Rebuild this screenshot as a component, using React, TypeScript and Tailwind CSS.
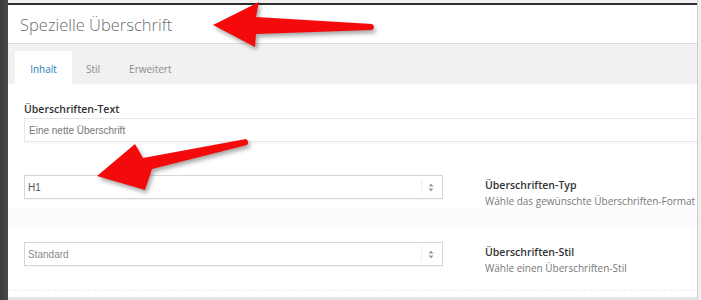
import React from 'react';

const sans = "font-['Open_Sans','Liberation_Sans',sans-serif]";

function UpDown() {
  return (
    <svg width="6" height="9" viewBox="0 0 6 9" className="text-[#999]">
      <path d="M3 0.5 L5.5 3.5 H0.5 Z" fill="currentColor" />
      <path d="M3 8.5 L5.5 5.5 H0.5 Z" fill="currentColor" />
    </svg>
  );
}

function SelectBox({ value, muted }: { value: string; muted?: boolean }) {
  return (
    <div className="flex h-[24px] w-[419px] items-center justify-between border border-[#d6d6d6] bg-white pl-[3px] pr-[8px] shadow-[0_1px_1px_rgba(0,0,0,0.04)]">
      <span className={`font-['Liberation_Sans',sans-serif] text-[10px] ${muted ? 'text-[#8a8a8a]' : 'text-[#555]'}`}>{value}</span>
      <div className="flex items-center gap-[6px]">
        <div className="h-[14px] w-px bg-[#eee]" />
        <UpDown />
      </div>
    </div>
  );
}

function FieldRow({ value, title, hint, muted }: { value: string; title: string; hint: string; muted?: boolean }) {
  return (
    <div className="flex items-start">
      <SelectBox value={value} muted={muted} />
      <div className={`ml-[42px] pt-[2px] ${sans} whitespace-nowrap`}>
        <div className="text-[10.5px] font-semibold leading-[16px] text-[#333]">{title}</div>
        <div className="text-[10px] leading-[16px] text-[#777]">{hint}</div>
      </div>
    </div>
  );
}

export default function App() {
  return (
    <div className="relative flex h-[300px] w-[701px] overflow-hidden bg-white">
      <div className="w-[8px] shrink-0 bg-gradient-to-r from-[#3a3a3a] to-[#4a4a4a]" />

      <div className="flex min-w-0 flex-1 flex-col overflow-hidden">
        <div className="h-[3px] bg-[#f2f2f2]" />
        <div className="h-[2px] bg-[#2e2e2e]" />

        <div className={`flex h-[39px] items-center border-b border-[#d9d9d9] pl-[12px] pt-[3px] text-[16.5px] font-light text-[#6d6d6d] ${sans}`}>
          Spezielle Überschrift
        </div>

        <div className={`flex h-[40px] items-end bg-[#f1f1f1] pl-[7px] text-[10px] ${sans}`}>
          <div className="flex h-[33px] w-[57px] items-center justify-center bg-white pt-[3px] text-[#2a7db5]">Inhalt</div>
          <div className="flex h-[33px] items-center pl-[14px] pt-[3px] text-[#8c8c8c]">Stil</div>
          <div className="flex h-[33px] items-center pl-[29px] pt-[3px] text-[#8c8c8c]">Erweitert</div>
        </div>

        <div className="flex flex-1 flex-col bg-white pl-[16px]">
          <div className={`pt-[18px] text-[10.5px] font-semibold leading-[15px] text-[#333] ${sans}`}>Überschriften-Text</div>
          <div className="-mr-[6px] mt-[1px] flex h-[24px] items-center border border-[#e6e6e6] pl-[4px] font-['Liberation_Sans',sans-serif] text-[10px] text-[#777] shadow-[0_2px_2px_rgba(0,0,0,0.03)]">
            Eine nette Überschrift
          </div>

          <div className="mt-[33px]">
            <FieldRow value="H1" title="Überschriften-Typ" hint="Wähle das gewünschte Überschriften-Format" />
          </div>

          <div className="-ml-[16px] h-[20px] bg-[#fbfbfb]" />

          <div className="mt-[13px]">
            <FieldRow value="Standard" title="Überschriften-Stil" hint="Wähle einen Überschriften-Stil" muted />
          </div>

          <div className="mt-auto -ml-[16px] border-b border-dashed border-[#eee]" />
          <div className="-ml-[16px] mt-[6px] h-[3px] bg-[#e4e4e4]" />
        </div>
      </div>

      <div className="w-px shrink-0 bg-[#cfcfcf]" />
      <div className="w-[3px] shrink-0 bg-[#f0f0f0]" />

      <svg
        className="pointer-events-none absolute left-0 top-0 drop-shadow-[2px_3px_2px_rgba(0,0,0,0.35)]"
        width="701"
        height="300"
        viewBox="0 0 701 300"
      >
        <path d="M213 25 L259 2 L256 17 L372 24 Q376 27 372 30 L256 34 L255 47 Z" fill="#f40a0a" />
        <path d="M97 176 L135 144 L143 158 L246 139 Q250 142 247 145 L152 169 L145 190 Z" fill="#f40a0a" />
      </svg>
    </div>
  );
}
